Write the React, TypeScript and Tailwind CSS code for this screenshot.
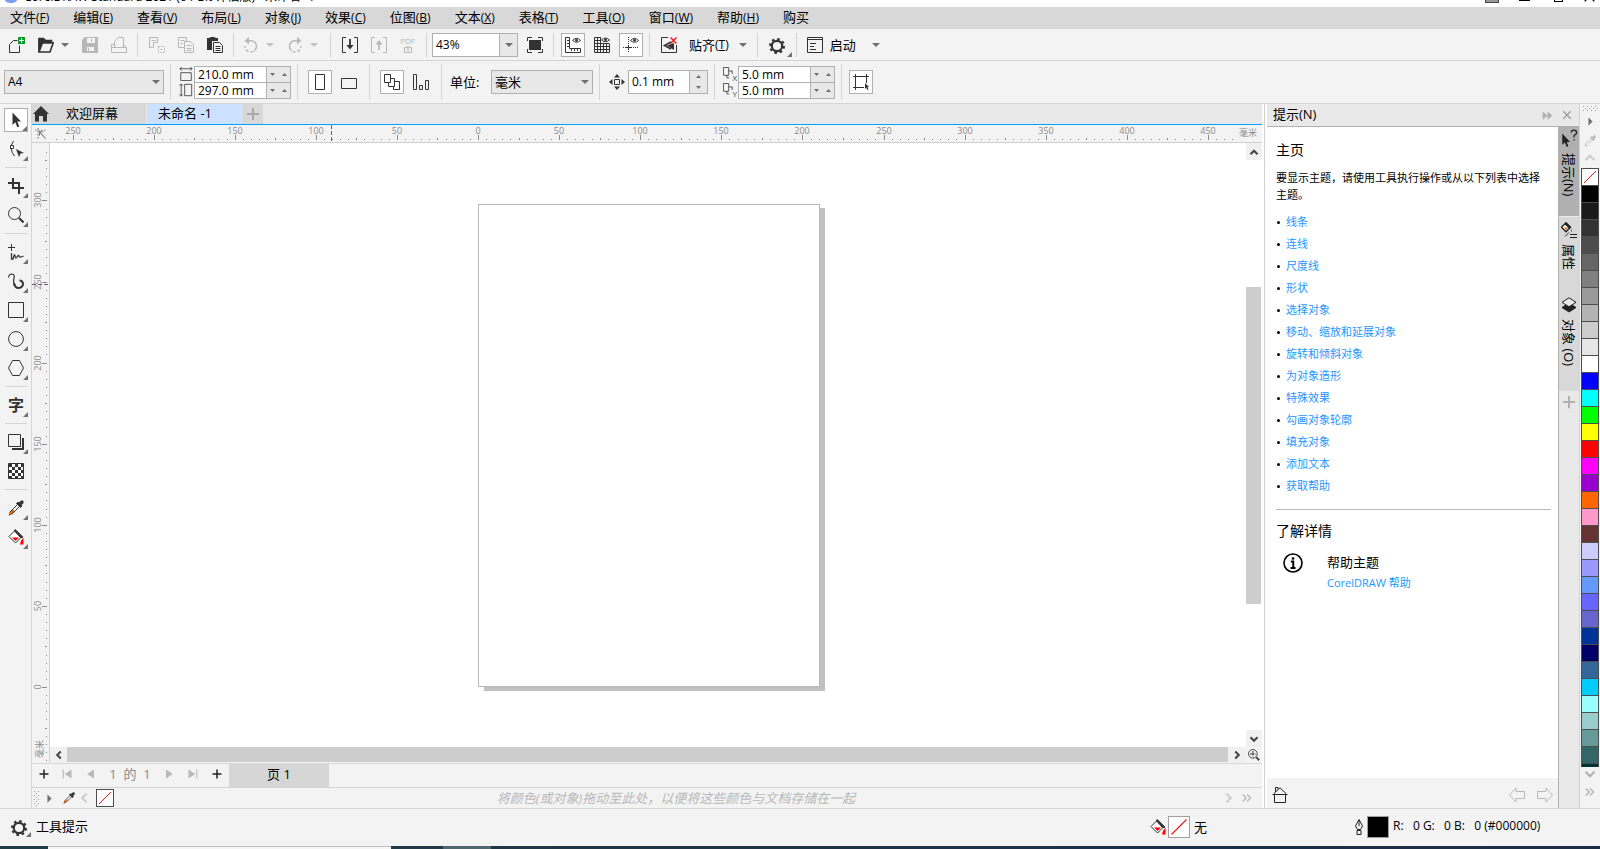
import { ReactNode } from "react";
import clsx from "clsx";

const menus = [
  { label: "文件", key: "F" },
  { label: "编辑", key: "E" },
  { label: "查看", key: "V" },
  { label: "布局", key: "L" },
  { label: "对象", key: "J" },
  { label: "效果", key: "C" },
  { label: "位图", key: "B" },
  { label: "文本", key: "X" },
  { label: "表格", key: "T" },
  { label: "工具", key: "O" },
  { label: "窗口", key: "W" },
  { label: "帮助", key: "H" },
  { label: "购买", key: "" },
];

const topics = [
  "线条",
  "连线",
  "尺度线",
  "形状",
  "选择对象",
  "移动、缩放和延展对象",
  "旋转和倾斜对象",
  "为对象造形",
  "特殊效果",
  "勾画对象轮廓",
  "填充对象",
  "添加文本",
  "获取帮助",
];

const swatches = [
  "bg-black",
  "bg-[#1a1a1a]",
  "bg-[#333333]",
  "bg-[#4d4d4d]",
  "bg-[#666666]",
  "bg-[#808080]",
  "bg-[#999999]",
  "bg-[#b3b3b3]",
  "bg-[#cccccc]",
  "bg-[#e6e6e6]",
  "bg-white",
  "bg-[#0000ff]",
  "bg-[#00ffff]",
  "bg-[#00ff00]",
  "bg-[#ffff00]",
  "bg-[#ff0000]",
  "bg-[#ff00ff]",
  "bg-[#9900cc]",
  "bg-[#ff6600]",
  "bg-[#ff99cc]",
  "bg-[#663333]",
  "bg-[#ccccff]",
  "bg-[#9999ff]",
  "bg-[#6699ff]",
  "bg-[#6666ff]",
  "bg-[#6666cc]",
  "bg-[#003399]",
  "bg-[#000066]",
  "bg-[#336699]",
  "bg-[#00ccff]",
  "bg-[#99ffff]",
  "bg-[#99cccc]",
  "bg-[#669999]",
  "bg-[#336666]",
  "bg-[#003333]",
];

type IconProps = { children: ReactNode; size?: number; className?: string };

const Icon = ({ children, size = 16, className }: IconProps) => (
  <svg
    width={size}
    height={size}
    viewBox="0 0 16 16"
    fill="none"
    stroke="currentColor"
    className={clsx("shrink-0", className)}
    aria-hidden="true"
  >
    {children}
  </svg>
);

const Caret = ({ up, small }: { up?: boolean; small?: boolean }) => (
  <svg
    width={small ? 5 : 8}
    height={small ? 3 : 4}
    viewBox="0 0 8 4"
    preserveAspectRatio="none"
    fill="currentColor"
    className="shrink-0"
    aria-hidden="true"
  >
    <path d={up ? "M0 4L4 0L8 4Z" : "M0 0H8L4 4Z"} />
  </svg>
);

const Gear = ({ className }: { className?: string }) => (
  <Icon className={className}>
    <circle cx="8" cy="8" r="5.2" strokeWidth="2.2" />
    <circle cx="8" cy="8" r="7" strokeWidth="2" strokeDasharray="2.6 2.9" />
  </Icon>
);

const Eyedropper = ({ gray }: { gray?: boolean }) => (
  <Icon className={gray ? "text-[#b8b8b8]" : "text-[#333]"}>
    <path d="M9.5 4.5L2 12V14H4L11.5 6.5" />
    <path
      d="M10 2.2L11.2 3L13 1H15V3.2L13.2 5L13.8 6L12.5 7.5L8.5 3.5Z"
      fill="currentColor"
    />
    {!gray && (
      <path d="M5 10L1.5 13.5V14.5H2.5L6 11Z" stroke="#e66400" fill="#e66400" />
    )}
    <path d="M1 15.5L2.5 14" />
  </Icon>
);

const Bucket = () => (
  <Icon className="text-[#333]">
    <path d="M7.5 1L14 7.5L7.5 14L1 7.5Z" fill="#fff" />
    <path d="M7 .5L15 8.2L12.5 8.5L6.5 2Z" fill="currentColor" />
    <path d="M4 8.5H11L7.5 12Z" fill="red" stroke="none" />
    <path d="M15.5 8.5V15.5H12L13 12Z" fill="red" stroke="none" />
  </Icon>
);

const NoColor = () => (
  <svg
    viewBox="0 0 16 16"
    preserveAspectRatio="none"
    className="h-full w-full"
    aria-hidden="true"
  >
    <path d="M2 14L14 2" stroke="#e02020" />
  </svg>
);

const Chevron = ({ d, thick }: { d: string; thick?: boolean }) => (
  <Icon size={14}>
    <path d={d} strokeWidth={thick ? 2.4 : 1.5} />
  </Icon>
);

const Arrow = () => (
  <path
    d="M4.5 .5V13L7.3 10.3L9.3 15.3L11.3 14.5L9.3 9.6H13Z"
    fill="currentColor"
    stroke="none"
  />
);

type ButtonProps = {
  label: string;
  children: ReactNode;
  boxed?: boolean;
  disabled?: boolean;
};

const ToolButton = ({ label, children, boxed, disabled }: ButtonProps) => (
  <div className="flex w-[29px] shrink-0 justify-center">
    <button
      type="button"
      aria-label={label}
      disabled={disabled}
      className={clsx(
        "flex h-6 w-6 items-center justify-center",
        boxed && "border border-[#b0b0b0] bg-white",
        disabled ? "text-[#b8b8b8]" : "text-[#333]"
      )}
    >
      {children}
    </button>
  </div>
);

const DropArrow = ({ label, disabled }: { label: string; disabled?: boolean }) => (
  <button
    type="button"
    aria-label={label}
    className={clsx(
      "flex h-6 w-[15px] shrink-0 items-center justify-start pl-px",
      disabled ? "text-[#c4c4c4]" : "text-[#707070]"
    )}
  >
    <Caret />
  </button>
);

const Sep = ({ tall }: { tall?: boolean }) => (
  <div className="flex w-[9px] shrink-0 justify-center">
    <div className={clsx("w-px bg-[#d5d5d5]", tall ? "h-9" : "h-6")} />
  </div>
);

const StandardBar = () => (
  <div className="flex h-8 items-center border-b border-[#d5d5d5] pl-0.5">
    <ToolButton label="新建">
      <Icon>
        <path d="M8.5 3.5H4.5L.5 7.5V15.5H10.5V8.5" />
        <path d="M9 0H16V7H9Z" fill="#0a9a2d" stroke="none" />
        <path d="M12.5 1.2V5.8M10.2 3.5H14.8" stroke="#fff" />
      </Icon>
    </ToolButton>
    <ToolButton label="打开">
      <Icon>
        <path d="M1 15V1.5H5.5L7.5 3.5H13.5V6" strokeWidth="1.6" />
        <path d="M1 15L4.5 5.8H15.2L12 15Z" strokeWidth="1.6" />
        <path d="M1 2H5L7 4H13V6H4L1 13Z" fill="currentColor" />
      </Icon>
    </ToolButton>
    <DropArrow label="打开最近" />
    <ToolButton label="保存" disabled>
      <Icon>
        <path d="M0 16V3L3 0H16V16Z" fill="currentColor" stroke="none" />
        <path d="M5 1H13V6H5ZM5 10H12V14H5Z" fill="#f3f3f3" stroke="none" />
        <path d="M9.5 2V5M6.5 11V14" />
      </Icon>
    </ToolButton>
    <ToolButton label="打印" disabled>
      <Icon>
        <path d="M3.5 10.5V4.5L7.5 .5H12.5V10.5M3.5 7.5H.5V15.5H15.5V10.5H.5M12.5 7.5L15.5 10.5" />
      </Icon>
    </ToolButton>
    <Sep />
    <ToolButton label="剪切" disabled>
      <Icon>
        <path d="M4 10.5H.5V.5H8.5V5.5H4.5V10.5M2.5 3.5H6.5" />
        <path d="M9.5 9.5H15.5V15.5H9.5Z" strokeDasharray="1.5 1" />
        <path d="M11.5 12.5H13.5" />
      </Icon>
    </ToolButton>
    <ToolButton label="复制" disabled>
      <Icon>
        <path d="M6 10.5H.5V.5H8.5V4M2.5 3.5H6.5M2.5 6.5H5" />
        <path d="M6.5 4.5H12.5L15.5 7.5V15.5H6.5ZM8.5 8.5H13.5M8.5 11.5H13.5M8.5 13.5H13.5" />
      </Icon>
    </ToolButton>
    <ToolButton label="粘贴">
      <Icon>
        <path d="M0 1H2L4 0H7L9 1H11V4H5V13H0Z" fill="currentColor" stroke="none" />
        <path d="M6.5 5.5H12.5L15.5 8.5V15.5H6.5ZM8.5 9.5H13.5M8.5 11.5H13.5M8.5 13.5H13.5" />
      </Icon>
    </ToolButton>
    <Sep />
    <div className="mr-0.5 -ml-0.5 flex shrink-0">
      <ToolButton label="撤消" disabled>
        <Icon>
          <path d="M3 3.8H8A5.5 5.5 0 0 1 11.5 13.5" strokeWidth="1.5" />
          <path d="M6 0V7.6L1.5 3.8Z" fill="currentColor" stroke="none" />
          <path d="M10.5 14.3A5.8 5.8 0 0 1 2 9" strokeDasharray="3 2" strokeWidth="1.5" />
        </Icon>
      </ToolButton>
      <DropArrow label="撤消列表" disabled />
      <ToolButton label="重做" disabled>
        <Icon>
          <path d="M13 3.8H8A5.5 5.5 0 0 0 4.5 13.5" strokeWidth="1.5" />
          <path d="M10 0V7.6L14.5 3.8Z" fill="currentColor" stroke="none" />
          <path d="M5.5 14.3A5.8 5.8 0 0 0 14 9" strokeDasharray="3 2" strokeWidth="1.5" />
        </Icon>
      </ToolButton>
      <DropArrow label="重做列表" disabled />
    </div>
    <Sep />
    <ToolButton label="导入">
      <Icon>
        <path d="M4 .5H.5V15.5H4M12 .5H15.5V15.5H12" />
        <path d="M8 2V11" strokeWidth="1.8" />
        <path d="M4.5 8H11.5L8 12.5Z" fill="currentColor" stroke="none" />
      </Icon>
    </ToolButton>
    <ToolButton label="导出" disabled>
      <Icon>
        <path d="M4 .5H.5V15.5H4M12 .5H15.5V15.5H12" />
        <path d="M8 5V13" strokeWidth="1.8" />
        <path d="M4.5 7.5H11.5L8 3Z" fill="currentColor" stroke="none" />
      </Icon>
    </ToolButton>
    <ToolButton label="发布为 PDF" disabled>
      <span className="flex flex-col items-center text-[8px] leading-[8px]">
        PDF
        <Icon size={8}>
          <path d="M5 5H1V15H15V5H11M8 13V3M4 7L8 2L12 7" strokeWidth="2" />
        </Icon>
      </span>
    </ToolButton>
    <Sep />
    <div className="ml-px flex h-6 w-[86px] shrink-0 border border-[#b0b0b0] bg-white">
      <input
        aria-label="缩放级别"
        defaultValue="43%"
        className="min-w-0 flex-1 bg-white pl-[3px] text-xs outline-none"
      />
      <button
        type="button"
        aria-label="缩放列表"
        className="flex w-[18px] items-center justify-center border-l border-[#b0b0b0] bg-[#e8e8e8] text-[#707070]"
      >
        <Caret />
      </button>
    </div>
    <div className="w-0.5 shrink-0" />
    <ToolButton label="全屏预览">
      <Icon>
        <path d="M2 3H14V13H2Z" fill="currentColor" stroke="none" />
        <path d="M.5 4V.5H5M11 .5H15.5V4M15.5 12V15.5H11M5 15.5H.5V12" />
      </Icon>
    </ToolButton>
    <Sep />
    <ToolButton label="标尺" boxed>
      <Icon>
        <path d="M.5 .5H4.5V11.5H15.5V15.5H.5ZM2 3.5H4.5M2 6.5H4.5M2 9.5H4.5M6.5 14V11.5M9.5 14V11.5M12.5 14V11.5" />
        <path d="M7.5 3.5Q11.5 -.8 15.5 3.5Q11.5 7 7.5 3.5Z" />
        <circle cx="11.5" cy="3.2" r="1" fill="currentColor" />
      </Icon>
    </ToolButton>
    <ToolButton label="网格">
      <Icon>
        <path d="M7 .5H.5V15.5H15.5V7M3.5 .5V15.5M6.5 .5V15.5M9.5 6.5V15.5M12.5 6.5V15.5M.5 3.5H7M.5 6.5H15.5M.5 9.5H15.5M.5 12.5H15.5" />
        <path d="M7.5 3Q11.5 -1 15.5 3Q11.5 6.5 7.5 3Z" fill="#f3f3f3" />
        <circle cx="11.5" cy="2.8" r="1" fill="currentColor" />
      </Icon>
    </ToolButton>
    <ToolButton label="辅助线" boxed>
      <Icon>
        <path d="M5.5 0V16M0 10.5H16" strokeDasharray="1 1" />
        <path d="M3 10.5H8M5.5 8V13" />
        <path d="M7.5 3.5Q11.5 -.8 15.5 3.5Q11.5 7 7.5 3.5Z" />
        <circle cx="11.5" cy="3.2" r="1" fill="currentColor" />
      </Icon>
    </ToolButton>
    <Sep />
    <ToolButton label="关闭贴齐">
      <Icon>
        <path d="M7 .5H.5V15.5H15.5V8" />
        <path d="M10 5L3.5 8.5L10 12" strokeWidth="1.6" />
        <path d="M6 8.5L13 6V13Z" fill="currentColor" stroke="none" />
        <path d="M9.5 .5L15.5 6.5M15.5 .5L9.5 6.5" stroke="#ef1010" strokeWidth="1.3" />
      </Icon>
    </ToolButton>
    <button type="button" className="ml-1.5 flex shrink-0 items-center">
      贴齐
      <span className="text-xs">
        (<u>T</u>)
      </span>
      <span className="ml-2.5 text-[#707070]">
        <Caret />
      </span>
    </button>
    <div className="w-1.5 shrink-0" />
    <Sep />
    <button
      type="button"
      aria-label="选项"
      className="relative ml-1.5 h-6 w-6 shrink-0 text-[#333]"
    >
      <Gear className="mt-[3px] ml-px" />
      <Corner />
    </button>
    <Sep />
    <button type="button" className="ml-1.5 flex shrink-0 items-center">
      <Icon className="text-[#333]">
        <path d="M.5 .5H15.5V15.5H.5ZM.5 2.5H15.5M3 6.5H9M3 9.5H7M3 12.5H9" />
        <path d="M10 1.5H14" stroke="#fff" strokeDasharray="1 1" />
      </Icon>
      <span className="ml-[7px]">启动</span>
      <span className="ml-4 text-[#707070]">
        <Caret />
      </span>
    </button>
  </div>
);

const Corner = () => (
  <svg
    width="5"
    height="5"
    viewBox="0 0 5 5"
    className="absolute right-0 bottom-0 text-[#707070]"
    aria-hidden="true"
  >
    <path d="M5 0V5H0Z" fill="currentColor" />
  </svg>
);

const SpinPair = ({ names, value }: { names: string[]; value: string[] }) => (
  <div className="mr-0.5 ml-px flex w-[97px] shrink-0 flex-col border border-[#b0b0b0]">
    {names.map((name, i) => (
      <div
        key={name}
        className={clsx("flex bg-white", i > 0 ? "h-4 border-t border-[#b0b0b0]" : "h-[15px]")}
      >
        <input
          aria-label={name}
          defaultValue={value[i]}
          className="min-w-0 flex-1 pl-[3px] text-xs leading-[15px] outline-none"
        />
        <div className="flex w-6 items-center justify-around border-l border-[#b0b0b0] bg-[#e8e8e8] text-[#707070]">
          <button type="button" aria-label={`减小${name}`}>
            <Caret small />
          </button>
          <button type="button" aria-label={`增大${name}`}>
            <Caret small up />
          </button>
        </div>
      </div>
    ))}
  </div>
);

const PropertyBar = () => (
  <div className="flex h-[43px] items-center border-b border-[#d5d5d5] pl-1">
    <div className="relative mr-0.5 w-40 shrink-0">
      <select
        aria-label="页面大小"
        className="h-6 w-full appearance-none border border-[#b0b0b0] bg-[#e8e8e8] pl-[3px] text-xs outline-none"
      >
        <option>A4</option>
      </select>
      <span className="pointer-events-none absolute top-2.5 right-1 text-[#707070]">
        <Caret />
      </span>
    </div>
    <Sep tall />
    <div className="ml-1 flex flex-col gap-0.5 text-[#444]">
      <Icon size={14}>
        <path d="M2 6.5H14V15.5H2ZM1 2H15M3 0L1 2L3 4M13 0L15 2L13 4" />
      </Icon>
      <Icon size={14}>
        <path d="M6.5 1.5H14.5V14.5H6.5ZM2.5 1V15M.5 3L2.5 1L4.5 3M.5 13L2.5 15L4.5 13" />
      </Icon>
    </div>
    <SpinPair names={["页面宽度", "页面高度"]} value={["210.0 mm", "297.0 mm"]} />
    <Sep tall />
    <div className="w-[3px] shrink-0" />
    <ToolButton label="纵向" boxed>
      <Icon>
        <path d="M3.5 .5H12.5V15.5H3.5Z" />
      </Icon>
    </ToolButton>
    <ToolButton label="横向">
      <Icon>
        <path d="M.5 4.5H15.5V14.5H.5Z" />
      </Icon>
    </ToolButton>
    <div className="w-0.5 shrink-0" />
    <Sep tall />
    <div className="w-[3px] shrink-0" />
    <ToolButton label="所有页面" boxed>
      <Icon>
        <path d="M.5 .5H6.5V8.5H.5ZM6.5 4.5H10.5V12.5H4.5V8.5M10.5 7.5H15.5V15.5H9.5V12.5" />
      </Icon>
    </ToolButton>
    <ToolButton label="当前页面">
      <Icon>
        <path d="M.5 .5H3.5V15.5H.5ZM6.5 11.5H9.5V15.5H6.5ZM12.5 6.5H15.5V15.5H12.5Z" />
      </Icon>
    </ToolButton>
    <div className="w-0.5 shrink-0" />
    <Sep tall />
    <label htmlFor="unit" className="ml-1 w-[41px] shrink-0">
      单位:
    </label>
    <div className="relative mr-0.5 w-[102px] shrink-0">
      <select
        id="unit"
        className="h-6 w-full appearance-none border border-[#b0b0b0] bg-[#e8e8e8] pl-[3px] outline-none"
      >
        <option>毫米</option>
      </select>
      <span className="pointer-events-none absolute top-2.5 right-1 text-[#707070]">
        <Caret />
      </span>
    </div>
    <Sep tall />
    <Icon className="ml-[5px] text-[#333]">
      <path d="M5.5 5.5H10.5V10.5H5.5Z" />
      <path
        d="M8 0L11 3.5H5ZM8 16L11 12.5H5ZM0 8L3.5 5V11ZM16 8L12.5 5V11Z"
        fill="currentColor"
        stroke="none"
      />
    </Icon>
    <div className="mr-0.5 ml-[3px] flex h-6 w-20 shrink-0 border border-[#b0b0b0] bg-white">
      <input
        aria-label="微调距离"
        defaultValue="0.1 mm"
        className="min-w-0 flex-1 pl-[3px] text-xs outline-none"
      />
      <div className="flex w-[18px] flex-col items-center justify-around border-l border-[#b0b0b0] bg-[#e8e8e8] text-[#707070]">
        <button type="button" aria-label="增大微调距离" className="flex">
          <Caret small up />
        </button>
        <button type="button" aria-label="减小微调距离" className="flex">
          <Caret small />
        </button>
      </div>
    </div>
    <Sep tall />
    <div className="ml-1 flex w-3.5 shrink-0 flex-col gap-0.5 text-[#444]">
      {["X", "Y"].map((axis) => (
        <span key={axis} className="relative flex h-3.5">
          <Icon size={14}>
            <path d="M.5 .5H6.5V9.5H.5ZM6.5 4.5H10.5V8M4.5 9.5V12.5H7" />
          </Icon>
          <span className="absolute right-0 bottom-0 text-[8px] leading-[7px]">{axis}</span>
        </span>
      ))}
    </div>
    <SpinPair names={["再制距离 X", "再制距离 Y"]} value={["5.0 mm", "5.0 mm"]} />
    <Sep tall />
    <ToolButton label="将项目视为已填充" boxed>
      <Icon>
        <path d="M2.5 2.5H13.5V9M2.5 2.5V13.5H11" />
        <path d="M0 2.5H5M2.5 0V5M11 2.5H16M13.5 0V5M0 13.5H5M2.5 11V16" />
        <path d="M12 9V15L13.3 13.8L14.5 16L15.5 15.5L14.5 13H16Z" fill="currentColor" stroke="none" />
      </Icon>
    </ToolButton>
  </div>
);

const checker = Array.from({ length: 25 }, (_, i) => i).filter((i) => i % 2 === 0);

const tools: { label: string; icon: ReactNode; sep?: boolean; plain?: boolean }[] = [
  {
    label: "选择",
    icon: (
      <Icon>
        <Arrow />
      </Icon>
    ),
  },
  {
    label: "形状",
    sep: true,
    icon: (
      <Icon>
        <path d="M5.5 0Q2.5 4 3.2 8Q3.8 12 6.5 15" />
        <path d="M2.5 4.5H5.5V7.5H2.5Z" fill="#fff" />
        <path d="M8 8L16 12L12.5 12.5L11 16Z" fill="currentColor" stroke="none" />
      </Icon>
    ),
  },
  {
    label: "裁剪",
    icon: (
      <Icon>
        <path d="M5 0V10H16M0 5H11V16" strokeWidth="2" />
      </Icon>
    ),
  },
  {
    label: "缩放",
    sep: true,
    icon: (
      <Icon>
        <circle cx="6.5" cy="6.5" r="6" />
        <path d="M11 11L15.5 15.5" strokeWidth="2" />
      </Icon>
    ),
  },
  {
    label: "手绘",
    icon: (
      <Icon>
        <path d="M3.5 0V7M0 3.5H7" />
        <path d="M3.5 9V15H5Q6.5 8.5 7 12T9 13T11 12T13 13T15.5 12" strokeWidth="1.3" />
      </Icon>
    ),
  },
  {
    label: "艺术笔",
    icon: (
      <Icon>
        <path d="M.5 4.5Q1 1 4 1Q7 1.5 6 5T6.5 12.5" strokeWidth="1.2" />
        <path d="M6 10Q7 15 10.5 15Q15 14.5 15 10.5Q14.5 7.5 11.5 7.5" strokeWidth="2" />
      </Icon>
    ),
  },
  {
    label: "矩形",
    icon: (
      <Icon>
        <path d="M.5 .5H15.5V15.5H.5Z" />
      </Icon>
    ),
  },
  {
    label: "椭圆形",
    icon: (
      <Icon>
        <circle cx="8" cy="8" r="7.4" />
      </Icon>
    ),
  },
  {
    label: "多边形",
    sep: true,
    icon: (
      <Icon>
        <path d="M4.5 .5H11.5L15.5 8L11.5 15.5H4.5L.5 8Z" />
      </Icon>
    ),
  },
  {
    label: "文本",
    sep: true,
    icon: <span className="text-base leading-4 font-bold">字</span>,
  },
  {
    label: "阴影",
    icon: (
      <Icon>
        <path d="M.5 .5H12.5V12.5H.5Z" />
        <path d="M15 4V15H4" strokeWidth="2" />
      </Icon>
    ),
  },
  {
    label: "透明度",
    sep: true,
    plain: true,
    icon: (
      <Icon>
        <path d="M.5 .5H15.5V15.5H.5Z" fill="#fff" />
        {checker.map((i) => (
          <rect
            key={i}
            x={(i % 5) * 3 + 1}
            y={Math.floor(i / 5) * 3 + 1}
            width="3"
            height="3"
            fill="currentColor"
            stroke="none"
          />
        ))}
      </Icon>
    ),
  },
  { label: "颜色滴管", icon: <Eyedropper /> },
  { label: "交互式填充", icon: <Bucket /> },
];

const Toolbox = () => (
  <aside className="flex w-8 shrink-0 flex-col border-r border-[#d5d5d5] pt-px">
    {tools.map((tool, i) => (
      <div key={tool.label}>
        <div className="flex h-[29px] items-center pl-1">
          <button
            type="button"
            aria-label={tool.label}
            className={clsx(
              "relative flex h-6 w-6 items-center justify-center text-[#333]",
              i === 0 && "border border-[#b0b0b0] bg-white"
            )}
          >
            {tool.icon}
            {!tool.plain && <Corner />}
          </button>
        </div>
        {tool.sep && (
          <div className="flex h-2 items-center pl-[5px]">
            <div className="h-px w-[22px] bg-[#d5d5d5]" />
          </div>
        )}
      </div>
    ))}
  </aside>
);

// pixels per 5mm at the current zoom
const STEP = 8.11;
const H_ORIGIN = 428;
const V_ORIGIN = 544;

const HRuler = () => (
  <svg className="h-[17px] min-w-0 flex-1 text-[#8a8a8a]" aria-label="水平标尺">
    {Array.from({ length: 146 }, (_, i) => i - 52).map((n) => {
      const x = Math.round(H_ORIGIN + n * STEP);
      const len = n % 10 === 0 ? 5 : n % 5 === 0 ? 2 : 1;
      return (
        <g key={n} fill="currentColor">
          <rect x={x} y={15 - len} width="1" height={len} />
          {n % 10 === 0 && (
            <text x={x} y="9" fontSize="9" textAnchor="middle">
              {Math.abs(n * 5)}
            </text>
          )}
        </g>
      );
    })}
    <text x="1198" y="11" fontSize="9" textAnchor="middle" fill="currentColor">
      毫米
    </text>
    <path d="M281.5 0V17" stroke="#666" strokeDasharray="4 2" />
  </svg>
);

const VRuler = () => (
  <svg
    className="w-[18px] shrink-0 border-r border-[#d0d0d0] text-[#8a8a8a]"
    aria-label="垂直标尺"
  >
    {Array.from({ length: 76 }, (_, i) => i - 9).map((n) => {
      const y = Math.round(V_ORIGIN - n * STEP);
      const len = n % 10 === 0 ? 5 : n % 5 === 0 ? 2 : 1;
      return (
        <g key={n} fill="currentColor">
          <rect x={15 - len} y={y} width={len} height="1" />
          {n % 10 === 0 && n >= 0 && n <= 60 && (
            <text transform={`translate(9 ${y}) rotate(-90)`} fontSize="9" textAnchor="middle">
              {n * 5}
            </text>
          )}
        </g>
      );
    })}
    <text transform="translate(11 606) rotate(-90)" fontSize="9" textAnchor="middle" fill="currentColor">
      毫米
    </text>
    <path d="M0 141.5H18" stroke="#666" strokeDasharray="4 2" />
  </svg>
);

const Canvas = () => (
  <div className="flex min-h-0 flex-1">
    <VRuler />
    <div className="flex min-w-0 flex-1 flex-col">
      <div className="flex min-h-0 flex-1">
        <div className="relative min-w-0 flex-1 overflow-hidden bg-white">
          <div className="absolute top-[65px] left-[434px] h-[483px] w-[341px] bg-[#c0c0c0]" />
          <div className="absolute top-[61px] left-[428px] h-[483px] w-[342px] border border-[#b8b8b8] bg-white" />
        </div>
        <div className="flex w-4 flex-col bg-white text-[#444]">
          <button type="button" aria-label="向上滚动" className="flex h-[17px] items-center justify-center bg-[#f0f0f0]">
            <Chevron d="M4 10.5L8 6.5L12 10.5" thick />
          </button>
          <div className="grow-[127]" />
          <div className="w-[15px] grow-[316] bg-[#cdcdcd]" />
          <div className="grow-[126]" />
          <button type="button" aria-label="向下滚动" className="flex h-[17px] items-center justify-center bg-[#f0f0f0]">
            <Chevron d="M4 6L8 10L12 6" thick />
          </button>
        </div>
      </div>
      <div className="flex h-4 items-start text-[#444]">
        <button type="button" aria-label="向左滚动" className="flex h-4 w-[17px] items-center justify-center bg-[#f0f0f0]">
          <Chevron d="M10 4L6 8L10 12" thick />
        </button>
        <div className="h-[15px] flex-1 bg-[#cdcdcd]" />
        <button type="button" aria-label="向右滚动" className="flex h-4 w-[17px] items-center justify-center bg-[#f0f0f0]">
          <Chevron d="M6 4L10 8L6 12" thick />
        </button>
        <button type="button" aria-label="导航器" className="flex h-4 w-[17px] items-center justify-center">
          <Icon size={12}>
            <circle cx="6.5" cy="6.5" r="5.8" strokeWidth="1.3" />
            <path d="M6.5 3V10M3 6.5H10" strokeDasharray="2 1" strokeWidth="2" />
            <path d="M11 11L15 15" strokeWidth="2.4" />
          </Icon>
        </button>
      </div>
    </div>
  </div>
);

const Plus = () => (
  <Icon size={12}>
    <path d="M8 2V14M2 8H14" strokeWidth="2" />
  </Icon>
);

const navClass = "flex h-5 w-6 shrink-0 items-center justify-center";

const PageNav = () => (
  <div className="flex h-6 shrink-0 items-start border-t border-[#d8d8d8]">
    <button type="button" aria-label="在前面添加页" className={clsx(navClass, "w-[23px] text-[#222]")}>
      <Plus />
    </button>
    <button type="button" aria-label="首页" className={clsx(navClass, "text-[#b8b8b8]")}>
      <Icon size={12}>
        <path d="M3 2V14" strokeWidth="1.5" />
        <path d="M14 2V14L5 8Z" fill="currentColor" stroke="none" />
      </Icon>
    </button>
    <button type="button" aria-label="上一页" className={clsx(navClass, "text-[#b8b8b8]")}>
      <Icon size={12}>
        <path d="M12 2V14L3 8Z" fill="currentColor" stroke="none" />
      </Icon>
    </button>
    <span className="w-[54px] shrink-0 text-center whitespace-pre text-[#8a8a8a]">1  的  1</span>
    <button type="button" aria-label="下一页" className={clsx(navClass, "text-[#b8b8b8]")}>
      <Icon size={12}>
        <path d="M4 2V14L13 8Z" fill="currentColor" stroke="none" />
      </Icon>
    </button>
    <button type="button" aria-label="末页" className={clsx(navClass, "text-[#b8b8b8]")}>
      <Icon size={12}>
        <path d="M13 2V14" strokeWidth="1.5" />
        <path d="M2 2V14L11 8Z" fill="currentColor" stroke="none" />
      </Icon>
    </button>
    <button type="button" aria-label="在后面添加页" className={clsx(navClass, "text-[#222]")}>
      <Plus />
    </button>
    <button type="button" className="h-full w-[100px] shrink-0 bg-[#d6d6d6] pb-[3px]">
      页 1
    </button>
  </div>
);

const Grip = ({ wide }: { wide?: boolean }) => (
  <svg width={wide ? 15 : 6} height={wide ? 6 : 15} className="shrink-0" aria-hidden="true">
    <defs>
      <pattern id="grip" width="4" height="4" patternUnits="userSpaceOnUse">
        <path d="M0 0H1V1H0ZM2 2H3V3H2Z" fill="#a0a0a0" />
      </pattern>
    </defs>
    <rect width="100%" height="100%" fill="url(#grip)" />
  </svg>
);

const DocPalette = () => (
  <div className="flex h-[21px] shrink-0 items-center border-t border-[#d5d5d5] text-[#b8b8b8]">
    <div className="flex w-16 shrink-0 items-center pl-0.5">
      <Grip />
      <button type="button" aria-label="调色板菜单" className="ml-1 text-[#707070]">
        <Icon size={11}>
          <path d="M5 2V14L11 8Z" fill="currentColor" stroke="none" />
        </Icon>
      </button>
      <button type="button" aria-label="滴管" className="ml-1.5 scale-75">
        <Eyedropper />
      </button>
      <button type="button" aria-label="向左" className="text-[#cccccc]">
        <Chevron d="M11 3L6 8L11 13" thick />
      </button>
    </div>
    <button type="button" aria-label="无颜色" className="h-[18px] w-[18px] shrink-0 border border-[#4d4d4d] bg-white">
      <NoColor />
    </button>
    <span className="flex-1 pb-px pl-4 text-center italic">
      将颜色(或对象)拖动至此处，以便将这些颜色与文档存储在一起
    </span>
    <button type="button" aria-label="向右" className="mr-1 text-[#cccccc]">
      <Chevron d="M5 3L10 8L5 13" thick />
    </button>
    <button type="button" aria-label="展开" className="mr-2">
      <Chevron d="M3 4L7 8L3 12M8 4L12 8L8 12" />
    </button>
  </div>
);

const Workspace = () => (
  <section className="flex min-w-0 flex-1 flex-col">
    <div className="flex h-[21px] shrink-0 border-b border-[#00a2ff] bg-[#e9e9e9] leading-[18px]">
      <button type="button" aria-label="主页" className="flex w-[18px] items-center justify-center bg-[#d8d8d8] text-[#333]">
        <Icon>
          <path d="M8 0L16 8H14V15.5H10V10H6V15.5H2V8H0Z" fill="currentColor" stroke="none" />
        </Icon>
      </button>
      <button type="button" className="w-24 bg-[#d8d8d8] pr-3 pb-0.5">
        欢迎屏幕
      </button>
      <button type="button" className="ml-px w-[94px] bg-[#cce0ff] pr-[18px] pb-0.5">
        未命名 -1
      </button>
      <button type="button" aria-label="新建选项卡" className="ml-px flex w-[21px] items-center justify-center bg-[#d8d8d8] text-[#a8a8a8]">
        <Icon size={12}>
          <path d="M8 0V16M0 8H16" strokeWidth="2.6" />
        </Icon>
      </button>
    </div>
    <div className="flex h-[18px] shrink-0 border-b border-[#d0d0d0]">
      <div className="flex w-[18px] shrink-0 items-center justify-center text-[#777]">
        <Icon size={12}>
          <path d="M0 3H16M4 0V16" strokeDasharray="2 2" strokeWidth="1.5" />
          <path d="M6 5L14 14M6 10V5H11" strokeWidth="1.5" />
        </Icon>
      </div>
      <HRuler />
    </div>
    <Canvas />
    <PageNav />
    <DocPalette />
  </section>
);

type SideTabProps = {
  text: string;
  active?: boolean;
  children: ReactNode;
  className: string;
};

const SideTab = ({ text, active, children, className }: SideTabProps) => (
  <button
    type="button"
    className={clsx(
      "flex w-5 shrink-0 flex-col items-center gap-1.5 text-[#222]",
      active ? "bg-[#b0b0b0]" : "bg-[#d8d8d8]",
      className
    )}
  >
    {children}
    <span className="leading-5 whitespace-nowrap text-black [text-orientation:sideways] [writing-mode:vertical-rl]">
      {text}
    </span>
  </button>
);

const HintsPanel = () => (
  <section className="flex w-[312px] shrink-0 flex-col bg-[#e9e9e9]">
    <header className="flex h-[23px] shrink-0 items-center border-b border-[#b0b0b0] pl-1.5">
      <h1 className="flex-1 pb-0.5">提示(N)</h1>
      <button type="button" aria-label="折叠" className="mr-2 text-[#b0b0b0]">
        <Icon size={11}>
          <path d="M1 2V14L8 8ZM8 2V14L15 8Z" fill="currentColor" stroke="none" />
        </Icon>
      </button>
      <button type="button" aria-label="关闭" className="mr-1.5 text-[#a0a0a0]">
        <Icon size={12}>
          <path d="M3 3L13 13M13 3L3 13" strokeWidth="2" />
        </Icon>
      </button>
    </header>
    <div className="flex min-h-0 flex-1">
      <div className="flex min-w-0 flex-1 flex-col border-r border-[#b0b0b0] bg-[#f3f3f3]">
        <div className="min-h-0 flex-1 bg-white pt-3 pr-[7px] pl-[9px]">
          <h2 className="text-sm leading-[22px]">主页</h2>
          <p className="mt-2 mb-2 pr-2.5 text-[11px] leading-[17px]">
            要显示主题，请使用工具执行操作或从以下列表中选择主题。
          </p>
          <ul>
            {topics.map((topic) => (
              <li key={topic} className="flex h-[22px] items-center text-[11px] leading-[22px]">
                <span className="mx-px h-[3px] w-[3px] rounded-full bg-black" />
                <a href="#" className="ml-[5px] text-[#1e96ff]">
                  {topic}
                </a>
              </li>
            ))}
          </ul>
          <hr className="mt-3 border-[#b8b8b8]" />
          <h2 className="mt-2.5 text-sm leading-[22px]">了解详情</h2>
          <div className="mt-2.5 flex pl-[7px]">
            <Icon size={20} className="mt-px">
              <circle cx="8" cy="8" r="7.2" strokeWidth="1.3" />
              <path d="M6.3 6.8H8.2V12M6 12H10" strokeWidth="1.6" />
              <path d="M7 3.5H9V5.3H7Z" fill="currentColor" stroke="none" />
            </Icon>
            <div className="ml-6 leading-5">
              <h3>帮助主题</h3>
              <a href="#" className="block text-[11px] leading-[22px] text-[#1e96ff]">
                CorelDRAW 帮助
              </a>
            </div>
          </div>
        </div>
        <footer className="flex h-[30px] shrink-0 items-center px-1 pt-1">
          <button type="button" aria-label="主页" className="flex-1 pl-px text-[#222]">
            <Icon>
              <path d="M2.5 7.5H13.5V15.5H2.5ZM.5 7.5H15.5M1.5 7L8 .8L14.5 7M3.5 5V.5H6V2.5" />
            </Icon>
          </button>
          <button type="button" aria-label="后退" className="mr-3 text-[#b8b8b8]">
            <Icon>
              <path d="M.5 8L7 1V4.5H15.5V11.5H7V15Z" />
            </Icon>
          </button>
          <button type="button" aria-label="前进" className="mr-px text-[#b8b8b8]">
            <Icon>
              <path d="M15.5 8L9 1V4.5H.5V11.5H9V15Z" />
            </Icon>
          </button>
        </footer>
      </div>
      <nav className="flex w-5 shrink-0 flex-col">
        <SideTab text="提示(N)" active className="h-[89px] pt-0.5">
          <Icon size={18}>
            <path d="M2 4V14L4.3 12L6 16L7.5 15.4L6 11.5H9Z" fill="currentColor" stroke="none" />
            <path d="M10 3Q10 1 12.3 1T14.8 3Q14.8 4.5 12.5 5.8V7.5M12.5 9V10.2" strokeWidth="1.2" />
          </Icon>
        </SideTab>
        <SideTab text="属性" className="mt-px h-[75px] pt-[5px]">
          <Icon>
            <path d="M5 .8L9.5 5.3L5 9.8L.5 5.3Z" fill="#fff" strokeWidth="1.4" />
            <path d="M5 .8L9.5 5.3L8 6L4 2Z" fill="currentColor" />
            <path d="M3 5.5H7.5L5 8Z" fill="#e66400" stroke="none" />
            <path d="M9 12.5H16M9 15.5H16M4 14.5L8 10.5" />
            <path d="M10.5 7V10" stroke="#e66400" />
          </Icon>
        </SideTab>
        <SideTab text="对象 (O)" className="h-[99px] pt-[5px]">
          <Icon>
            <path d="M8 6L15 10.5L8 15L1 10.5Z" fill="currentColor" />
            <path d="M8 .8L15 5.3L8 9.8L1 5.3Z" fill="#e8e8e8" />
          </Icon>
        </SideTab>
        <button type="button" aria-label="添加泊坞窗" className="flex justify-center pt-1 text-[#b0b0b0]">
          <Icon size={14}>
            <path d="M8 1V15M1 8H15" strokeWidth="2.2" />
          </Icon>
        </button>
      </nav>
    </div>
  </section>
);

const ColorStrip = () => (
  <aside className="flex w-[21px] shrink-0 flex-col items-center border-l border-[#d5d5d5]">
    <div className="flex h-16 shrink-0 flex-col items-center pt-0.5 text-[#b8b8b8]">
      <Grip wide />
      <button type="button" aria-label="调色板菜单" className="mt-1 text-[#707070]">
        <Icon size={11}>
          <path d="M5 2V14L11 8Z" fill="currentColor" stroke="none" />
        </Icon>
      </button>
      <button type="button" aria-label="滴管" className="mt-1.5 scale-75">
        <Eyedropper gray />
      </button>
      <button type="button" aria-label="向上" className="mt-0.5 text-[#cccccc]">
        <Chevron d="M3 10.5L8 5.5L13 10.5" thick />
      </button>
    </div>
    <ul className="min-h-0 w-[18px] flex-1 overflow-hidden">
      <li className="h-[17px] border border-b-0 border-[#4d4d4d] bg-white">
        <button type="button" aria-label="无颜色" className="block h-full w-full">
          <NoColor />
        </button>
      </li>
      {swatches.map((color) => (
        <li key={color} className="h-[17px] border border-b-0 border-[#4d4d4d]">
          <button type="button" aria-label="色样" className={clsx("block h-full w-full", color)} />
        </li>
      ))}
    </ul>
    <div className="flex h-[41px] shrink-0 flex-col items-center gap-1 text-[#b0b0b0]">
      <button type="button" aria-label="向下" className="flex">
        <Chevron d="M3 5.5L8 10.5L13 5.5" thick />
      </button>
      <button type="button" aria-label="展开" className="flex">
        <Chevron d="M3 4L7 8L3 12M8 4L12 8L8 12" />
      </button>
    </div>
  </aside>
);

const StatusBar = () => (
  <footer className="flex h-[38px] shrink-0 items-center border-t border-[#d5d5d5] pb-0.5">
    <button type="button" aria-label="状态栏选项" className="relative ml-[11px] h-5 w-5 shrink-0 text-[#333]">
      <Gear className="mt-0.5" />
      <Corner />
    </button>
    <span className="ml-[5px] flex-1 pb-px">工具提示</span>
    <div className="flex w-[205px] items-center">
      <Bucket />
      <span className="mr-1 ml-0.5 h-[22px] w-[22px] border border-[#a0a0a0] bg-white">
        <NoColor />
      </span>
      无
    </div>
    <div className="flex w-[245px] items-center text-xs">
      <Icon className="-ml-1 text-[#222]">
        <path d="M8 .5L4.5 7L6.5 10.5H9.5L11.5 7ZM8 1V7M6 11.5H10V15.5H6Z" />
      </Icon>
      <span className="mr-1 h-[22px] w-[22px] border border-[#a0a0a0] bg-black" />
      <span className="pb-px whitespace-pre">R:   0 G:   0 B:   0 (#000000)</span>
    </div>
  </footer>
);

const App = () => (
  <div className="flex h-screen flex-col overflow-hidden bg-[#f3f3f3] font-['Open_Sans','Noto_Sans_CJK_SC',sans-serif] text-[13px] leading-5 text-black">
    <header className="flex h-[7px] shrink-0 items-end overflow-hidden bg-white">
      <span className="mr-1.5 mb-1 ml-1 h-4 w-3.5 shrink-0 rounded-md bg-[#7c9cf0]" />
      <span className="flex-1 text-xs leading-5">CorelDRAW Standard 2021 (64-Bit 评估版) - 未命名 -1</span>
      <div className="mr-1 flex shrink-0 items-end gap-5 pb-1 text-black">
        <span className="h-3 w-3.5 border border-[#444] bg-[#999]" />
        <span className="mb-0.5 h-px w-[11px] bg-black" />
        <span className="mb-px ml-1 h-2.5 w-[9px] border border-black" />
        <Icon size={13}>
          <path d="M2 2L14 14M14 2L2 14" strokeWidth="1.5" />
        </Icon>
      </div>
    </header>
    <nav className="flex h-[22px] shrink-0 items-center gap-6 bg-[#d8d8d8] pb-0.5 pl-2.5">
      {menus.map((menu) => (
        <button key={menu.label} type="button" className="shrink-0">
          {menu.label}
          {menu.key && (
            <span className="text-xs">
              (<u>{menu.key}</u>)
            </span>
          )}
        </button>
      ))}
    </nav>
    <StandardBar />
    <PropertyBar />
    <main className="flex min-h-0 flex-1">
      <Toolbox />
      <Workspace />
      <div className="flex w-[5px] shrink-0 justify-center bg-white">
        <div className="w-px bg-[#d0d0d0]" />
      </div>
      <HintsPanel />
      <ColorStrip />
    </main>
    <StatusBar />
    <div className="flex h-[3px] shrink-0 bg-linear-to-r from-[#223c44] to-[#1c2a48]">
      <div className="ml-12 w-[343px] border-t border-[#c0c0c0] bg-[#f5f5f5]" />
      <div className="ml-[52px] w-12 bg-[#52666e]" />
    </div>
  </div>
);

export default App;
